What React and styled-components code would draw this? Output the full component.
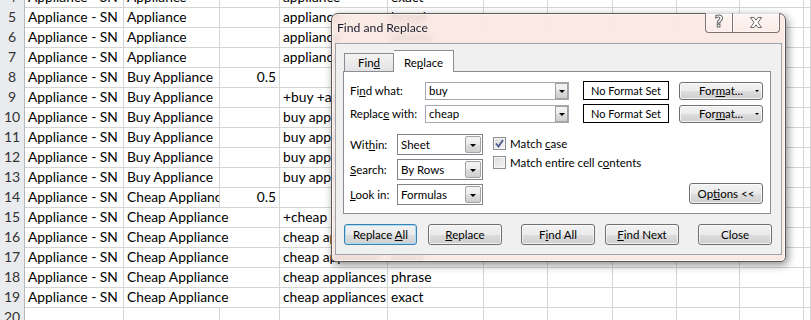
import React from 'react'
import styled, { createGlobalStyle } from 'styled-components'

const GlobalStyle = createGlobalStyle`
  html, body {
    margin: 0;
    padding: 0;
    background: #fff;
    overflow: hidden;
  }
  body {
    width: 811px;
    height: 320px;
    position: relative;
  }
`

const COLS = '25px 99px 96px 60px 108px 96px 64px 65px 64px 63px 64px 1fr'

const Sheet = styled.div`
  margin-top: -13px;
  font-family: Lato, 'Liberation Sans', sans-serif;
  font-size: 13.8px;
  color: #000;
`

const Row = styled.div`
  display: grid;
  grid-template-columns: ${COLS};
  height: 20px;
`

const RowHead = styled.div`
  box-sizing: border-box;
  border-right: 1px solid #b4b7bd;
  border-bottom: 1px solid #c8cbd0;
  background: #e9ebee;
  color: #333;
  text-align: center;
  line-height: 20px;
  font-size: 14px;
`

const Cell = styled.div`
  box-sizing: border-box;
  border-bottom: 1px solid #d4d4d4;
  border-right: 1px solid ${props => props.$spill ? 'transparent' : '#d4d4d4'};
  padding: 0 3px;
  line-height: 20px;
  white-space: nowrap;
  overflow: ${props => props.$clip ? 'hidden' : 'visible'};
  text-align: ${props => props.$num ? 'right' : 'left'};
`

// A..F, rest empty
const rows = [
  [4, 'Appliance - SN', 'Appliance', '', 'appliance', 'exact'],
  [5, 'Appliance - SN', 'Appliance', '', 'appliance', 'broad'],
  [6, 'Appliance - SN', 'Appliance', '', 'appliance', 'phrase'],
  [7, 'Appliance - SN', 'Appliance', '', 'appliance', 'exact'],
  [8, 'Appliance - SN', 'Buy Appliance', '0.5', '', ''],
  [9, 'Appliance - SN', 'Buy Appliance', '', '+buy +appliance', 'broad'],
  [10, 'Appliance - SN', 'Buy Appliance', '', 'buy appliance', 'phrase'],
  [11, 'Appliance - SN', 'Buy Appliance', '', 'buy appliance', 'exact'],
  [12, 'Appliance - SN', 'Buy Appliance', '', 'buy appliances', 'phrase'],
  [13, 'Appliance - SN', 'Buy Appliance', '', 'buy appliances', 'exact'],
  [14, 'Appliance - SN', 'Cheap Appliance', '0.5', '', ''],
  [15, 'Appliance - SN', 'Cheap Appliance', '', '+cheap +appliance', 'broad'],
  [16, 'Appliance - SN', 'Cheap Appliance', '', 'cheap appliance', 'phrase'],
  [17, 'Appliance - SN', 'Cheap Appliance', '', 'cheap appliance', 'exact'],
  [18, 'Appliance - SN', 'Cheap Appliance', '', 'cheap appliances', 'phrase'],
  [19, 'Appliance - SN', 'Cheap Appliance', '', 'cheap appliances', 'exact'],
  [20, '', '', '', '', ''],
]

// cells whose text runs over the next (empty) cell
const spills = new Set(['15:2', '16:2', '17:2', '18:2', '19:2'])

function SheetRow({ data }) {
  const [num, ...vals] = data
  const cells = [...vals, '', '', '', '', '', '']
  return (
    <Row>
      <RowHead>{num}</RowHead>
      {cells.map((v, i) => (
        <Cell
          key={i}
          $num={/^[\d.]+$/.test(v)}
          $clip={!!cells[i + 1]}
          $spill={spills.has(num + ':' + (i + 1))}
        >
          {v}
        </Cell>
      ))}
    </Row>
  )
}

/* ---------- dialog ---------- */

const Dialog = styled.div`
  position: absolute;
  left: 331px;
  top: 13px;
  width: 455px;
  height: 249px;
  box-sizing: border-box;
  border: 1px solid #5e5a5a;
  border-radius: 7px 7px 5px 5px;
  background: rgba(249, 230, 224, 0.86);
  backdrop-filter: blur(3px);
  box-shadow: 2px 3px 9px rgba(0, 0, 0, 0.45), inset 0 0 0 1px rgba(255, 255, 255, 0.6);
  padding: 0 3px 6px 3px;
  display: flex;
  flex-direction: column;
  font-family: Lato, 'Liberation Sans', sans-serif;
  font-size: 11px;
  color: #000;
`

const TitleBar = styled.div`
  display: flex;
  align-items: flex-start;
  height: 29px;
  flex-shrink: 0;
`

const Title = styled.div`
  padding: 6px 0 0 2px;
  font-size: 12.2px;
  line-height: 16px;
  color: #1b1b30;
`

const WinButtons = styled.div`
  margin-left: auto;
  margin-right: 2px;
  margin-top: -1px;
  display: flex;
`

const WinButton = styled.div`
  box-sizing: border-box;
  width: ${props => props.$w}px;
  height: 20px;
  border: 1px solid #7f7272;
  border-top: none;
  border-left: ${props => props.$first ? '1px solid #7f7272' : 'none'};
  border-radius: ${props => props.$first ? '0 0 0 4px' : '0 0 4px 0'};
  background: linear-gradient(rgba(255, 255, 255, 0.55), rgba(255, 240, 236, 0.25));
  box-shadow: inset 0 0 0 1px rgba(255, 255, 255, 0.5);
  display: flex;
  align-items: center;
  justify-content: center;
`

const HelpGlyph = styled.span`
  font-family: 'DejaVu Sans', sans-serif;
  font-weight: bold;
  font-size: 15px;
  line-height: 15px;
  color: #fff;
  -webkit-text-stroke: 1px #6a6a6a;
`

const Client = styled.div`
  flex: 1;
  box-sizing: border-box;
  border: 1px solid #9fa2a8;
  background: #f0f0f0;
  padding: 6px 0 0 7px;
  display: flex;
  flex-direction: column;
`

const TabStrip = styled.div`
  display: flex;
  align-items: flex-end;
  height: 21px;
  padding-left: 1px;
`

const Tab = styled.div`
  box-sizing: border-box;
  width: ${props => props.$w}px;
  height: ${props => props.$active ? 22 : 18}px;
  margin-bottom: ${props => props.$active ? -1 : 0}px;
  position: relative;
  z-index: ${props => props.$active ? 1 : 0};
  border: 1px solid #898c95;
  border-bottom: none;
  border-left: ${props => props.$active ? 'none' : '1px solid #898c95'};
  background: ${props => props.$active ? '#fff' : 'linear-gradient(#f3f3f3, #e2e2e2)'};
  display: flex;
  align-items: center;
  justify-content: center;
  padding-top: ${props => props.$active ? 1 : 0}px;
  font-size: 11.5px;
`

const Panel = styled.div`
  box-sizing: border-box;
  width: 428px;
  height: 143px;
  border: 1px solid #898c95;
  background: #fff;
  padding: 9px 7px 0 6px;
  display: flex;
  flex-direction: column;
`

const FieldRows = styled.div`
  display: flex;
  flex-direction: column;
  gap: 4px;
`

const FieldRow = styled.div`
  display: flex;
  align-items: center;
  height: 19px;
`

const Label = styled.div`
  width: ${props => props.$w}px;
  flex-shrink: 0;
  font-size: 11.5px;
`

const Key = styled.span`
  text-decoration: underline;
`

const Combo = styled.div`
  box-sizing: border-box;
  width: ${props => props.$w}px;
  height: ${props => props.$h}px;
  border: 1px solid ${props => props.$dark ? '#7f838b' : '#a5a8b0'};
  background: #fff;
  display: flex;
  align-items: stretch;
  font-size: 11.5px;
`

const ComboText = styled.span`
  flex: 1;
  padding-left: 3px;
  display: flex;
  align-items: center;
`

const DropBtn = styled.span`
  box-sizing: border-box;
  width: ${props => props.$w}px;
  margin: ${props => props.$inset ? '1px' : '0'};
  border: 1px solid #a3a3a3;
  border-radius: ${props => props.$inset ? '2px' : '0'};
  background: linear-gradient(#f4f4f4 0%, #ececec 45%, #dcdcdc 55%, #cfcfcf 100%);
  display: flex;
  align-items: center;
  justify-content: center;
`

const Tri = styled.span`
  width: 0;
  height: 0;
  border-left: ${props => props.$s}px solid transparent;
  border-right: ${props => props.$s}px solid transparent;
  border-top: ${props => props.$s}px solid #000;
  margin-left: ${props => props.$ml || 0}px;
  margin-top: 1px;
`

const FormatBox = styled.div`
  box-sizing: border-box;
  width: 86px;
  height: 19px;
  margin-left: ${props => props.$ml}px;
  border: 1px solid #000;
  display: flex;
  align-items: center;
  justify-content: center;
`

const Button = styled.div`
  box-sizing: border-box;
  width: ${props => props.$w}px;
  height: ${props => props.$h || 21}px;
  margin-left: ${props => props.$ml || 0}px;
  border: 1px solid ${props => props.$default ? '#3c7fb1' : '#707070'};
  border-radius: 3px;
  background: linear-gradient(#f2f2f2 0%, #ebebeb 50%, #dddddd 51%, #cfcfcf 100%);
  box-shadow: inset 0 0 0 1px ${props => props.$default ? '#a6def8' : 'rgba(255, 255, 255, 0.7)'};
  display: flex;
  align-items: center;
  justify-content: ${props => props.$end ? 'flex-end' : 'center'};
  padding-right: ${props => props.$end ? 3 : 0}px;
  color: #000;
  font-size: 11.5px;
  white-space: nowrap;
`

const Lower = styled.div`
  display: flex;
  margin-top: 11px;
  height: 71px;
`

const SelectCol = styled.div`
  display: flex;
  flex-direction: column;
  gap: 4px;
`

const SelectRow = styled.div`
  display: flex;
  align-items: center;
  height: 21px;
`

const CheckCol = styled.div`
  margin-left: 10px;
  display: flex;
  flex-direction: column;
  font-size: 11.5px;
`

const CheckRow = styled.div`
  display: flex;
  align-items: center;
  height: 19px;
  gap: 4px;
`

const Box = styled.span`
  box-sizing: border-box;
  width: 13px;
  height: 13px;
  border: 1px solid #8e8f8f;
  background: linear-gradient(135deg, #d9d9d9, #f7f7f7);
  box-shadow: inset 0 0 0 1px #f4f4f4;
  display: flex;
  align-items: center;
  justify-content: center;
`

const OptionsButton = styled(Button)`
  margin-left: auto;
  align-self: flex-end;
  margin-bottom: 1px;
`

const ButtonRow = styled.div`
  display: flex;
  margin-top: 10px;
  padding-left: 1px;
`

function CloseGlyph() {
  return (
    <svg width="14" height="11" viewBox="0 0 14 11">
      <path
        d="M1.5,0.5 H5 L7,3.2 L9,0.5 H12.5 L9,5.5 L12.5,10.5 H9 L7,7.8 L5,10.5 H1.5 L5,5.5 Z"
        fill="#fff"
        stroke="#6a6a6a"
        strokeWidth="1"
      />
    </svg>
  )
}

function Check() {
  return (
    <svg width="9" height="9" viewBox="0 0 9 9">
      <path d="M1,4.5 L3.5,7.5 L8,1" fill="none" stroke="#4a5e8c" strokeWidth="1.8" />
    </svg>
  )
}

function ComboBox({ value, w, h, dark, btn }) {
  return (
    <Combo $w={w} $h={h} $dark={dark}>
      <ComboText>{value}</ComboText>
      <DropBtn $w={btn} $inset={dark}>
        <Tri $s={3.5} />
      </DropBtn>
    </Combo>
  )
}

function FormatButton() {
  return (
    <Button $w={84} $h={18} $ml={10} $end>
      <span>For<Key>m</Key>at...</span>
      <Tri $s={2.5} $ml={12} />
    </Button>
  )
}

function FindReplace() {
  return (
    <Dialog>
      <TitleBar>
        <Title>Find and Replace</Title>
        <WinButtons>
          <WinButton $w={28} $first>
            <HelpGlyph>?</HelpGlyph>
          </WinButton>
          <WinButton $w={47}>
            <CloseGlyph />
          </WinButton>
        </WinButtons>
      </TitleBar>
      <Client>
        <TabStrip>
          <Tab $w={50}><span>Fin<Key>d</Key></span></Tab>
          <Tab $w={60} $active><span>Re<Key>p</Key>lace</span></Tab>
        </TabStrip>
        <Panel>
          <FieldRows>
            <FieldRow>
              <Label $w={75}>Fi<Key>n</Key>d what:</Label>
              <ComboBox value="buy" w={144} h={18} btn={13} />
              <FormatBox $ml={14}>No Format Set</FormatBox>
              <FormatButton />
            </FieldRow>
            <FieldRow>
              <Label $w={75}>Replac<Key>e</Key> with:</Label>
              <ComboBox value="cheap" w={144} h={18} btn={13} />
              <FormatBox $ml={14}>No Format Set</FormatBox>
              <FormatButton />
            </FieldRow>
          </FieldRows>
          <Lower>
            <SelectCol>
              <SelectRow>
                <Label $w={47}>Wit<Key>h</Key>in:</Label>
                <ComboBox value="Sheet" w={86} h={21} btn={16} dark />
              </SelectRow>
              <SelectRow>
                <Label $w={47}><Key>S</Key>earch:</Label>
                <ComboBox value="By Rows" w={86} h={21} btn={16} dark />
              </SelectRow>
              <SelectRow>
                <Label $w={47}><Key>L</Key>ook in:</Label>
                <ComboBox value="Formulas" w={86} h={21} btn={16} dark />
              </SelectRow>
            </SelectCol>
            <CheckCol>
              <CheckRow>
                <Box><Check /></Box>
                <span>Match <Key>c</Key>ase</span>
              </CheckRow>
              <CheckRow>
                <Box />
                <span>Match entire cell c<Key>o</Key>ntents</span>
              </CheckRow>
            </CheckCol>
            <OptionsButton $w={74}><span>Op<Key>t</Key>ions &lt;&lt;</span></OptionsButton>
          </Lower>
        </Panel>
        <ButtonRow>
          <Button $w={73} $default><span>Replace <Key>A</Key>ll</span></Button>
          <Button $w={74} $ml={11}><span><Key>R</Key>eplace</span></Button>
          <Button $w={74} $ml={19}><span>F<Key>i</Key>nd All</span></Button>
          <Button $w={74} $ml={10}><span><Key>F</Key>ind Next</span></Button>
          <Button $w={74} $ml={19}><span>Close</span></Button>
        </ButtonRow>
      </Client>
    </Dialog>
  )
}

export default function App() {
  return (
    <>
      <GlobalStyle />
      <Sheet>
        {rows.map(r => <SheetRow key={r[0]} data={r} />)}
      </Sheet>
      <FindReplace />
    </>
  )
}
